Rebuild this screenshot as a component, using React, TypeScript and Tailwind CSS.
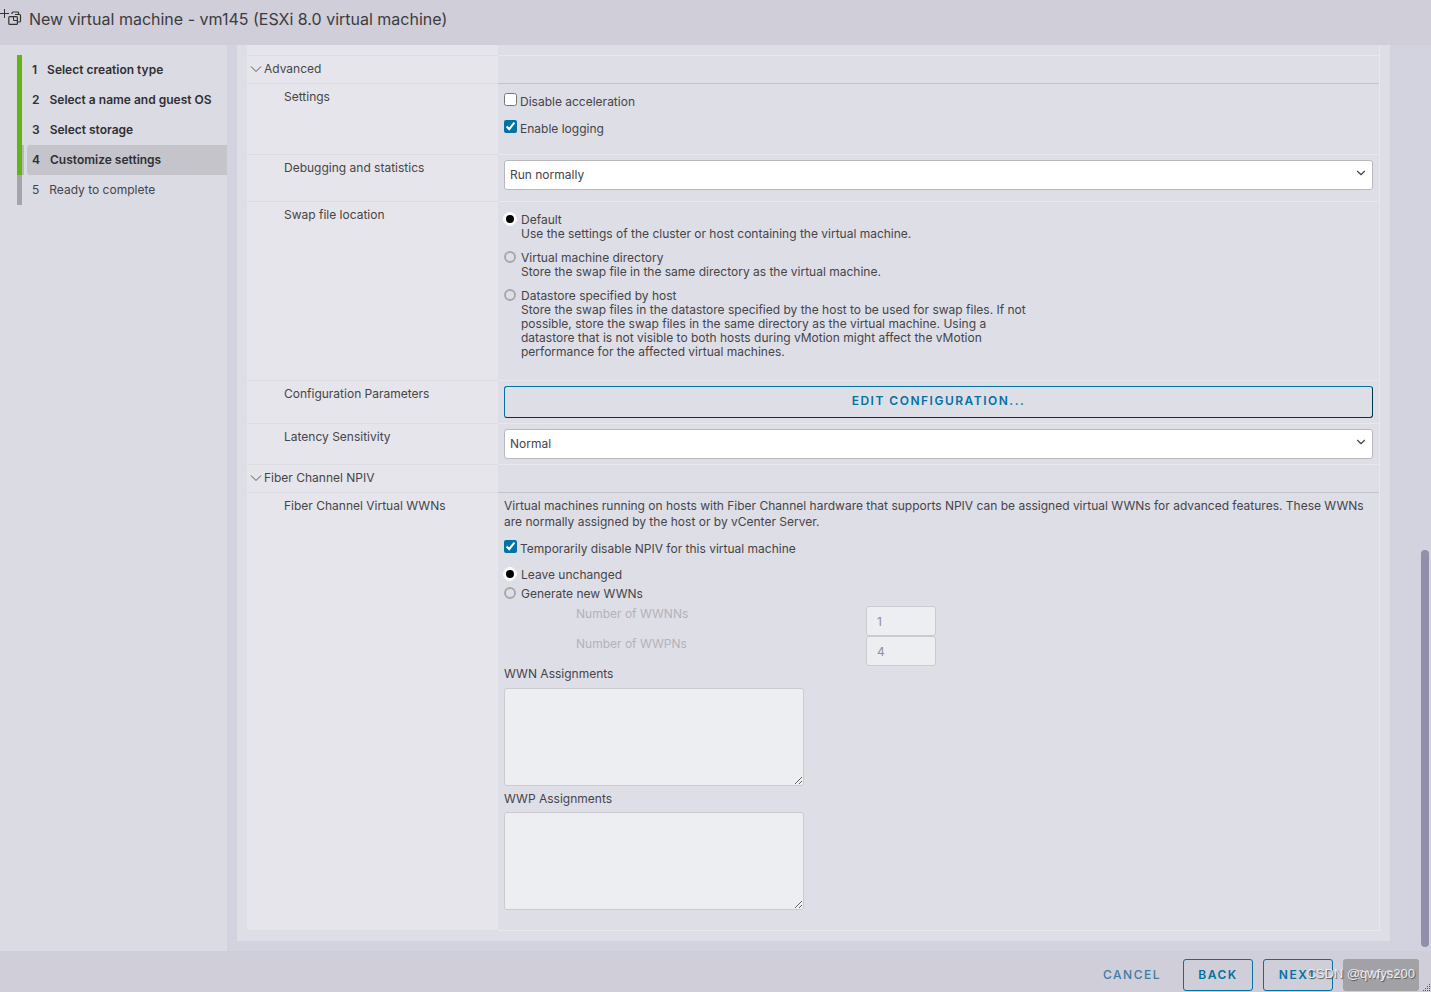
import React, { useState } from 'react';
import { ChevronDown } from 'lucide-react';
import clsx from 'clsx';

const steps = [
  'Select creation type',
  'Select a name and guest OS',
  'Select storage',
  'Customize settings',
  'Ready to complete',
];

const swapOptions = [
  {
    id: 'default',
    label: 'Default',
    text: 'Use the settings of the cluster or host containing the virtual machine.',
  },
  {
    id: 'directory',
    label: 'Virtual machine directory',
    text: 'Store the swap file in the same directory as the virtual machine.',
  },
  {
    id: 'datastore',
    label: 'Datastore specified by host',
    text: 'Store the swap files in the datastore specified by the host to be used for swap files. If not possible, store the swap files in the same directory as the virtual machine. Using a datastore that is not visible to both hosts during vMotion might affect the vMotion performance for the affected virtual machines.',
  },
];

const NewVmIcon = () => (
  <svg width="22" height="26" viewBox="0 0 22 26" fill="none" stroke="#333" aria-hidden="true">
    <path d="M0 13.5h9M4.5 9v9" />
    <path d="M12 14v-1a1 1 0 0 1 1-1h5.5M15 14.5h4.5a1 1 0 0 1 1 1v5.5a1 1 0 0 1-1 1h-1.5M18.5 12v3" strokeWidth="1.2" />
    <rect x="8.8" y="16.6" width="8.6" height="7.8" rx="1" strokeWidth="1.2" />
    <path d="M13.5 17v3.5h4" />
  </svg>
);

const Checkbox = ({ label, defaultChecked = false }: { label: string; defaultChecked?: boolean }) => (
  <label className="flex items-start gap-[3px]">
    <input type="checkbox" defaultChecked={defaultChecked} className="size-[13px] accent-[#0072a3]" />
    <span className="pt-px">{label}</span>
  </label>
);

type RadioProps = {
  name: string;
  label: string;
  text?: string;
  checked: boolean;
  onChange: () => void;
};

const Radio = ({ name, label, text, checked, onChange }: RadioProps) => (
  <label className="flex items-start gap-[5px] leading-[14px]">
    <input
      type="radio"
      name={name}
      checked={checked}
      onChange={onChange}
      className="size-3 shrink-0 appearance-none rounded-full border-2 border-[#a9a9ad] checked:border-white checked:bg-black checked:outline checked:outline-white"
    />
    <span className="flex max-w-[510px] flex-col">
      <span>{label}</span>
      {text && <span>{text}</span>}
    </span>
  </label>
);

const Select = ({ id, options }: { id: string; options: string[] }) => (
  <div className="relative">
    <select
      id={id}
      className="block h-[30px] w-full appearance-none rounded-[3px] border border-[#b9b9bd] bg-white px-[5px]"
    >
      {options.map((option) => (
        <option key={option}>{option}</option>
      ))}
    </select>
    <ChevronDown size={14} strokeWidth={2} className="pointer-events-none absolute top-1.5 right-[5px]" />
  </div>
);

type RowProps = {
  label: string;
  htmlFor?: string;
  className?: string;
  children: React.ReactNode;
};

const Row = ({ label, htmlFor, className, children }: RowProps) => (
  <div className="grid grid-cols-[251px_minmax(0,1fr)]">
    <div className="border-b border-[#dbdbe1] bg-[#e6e5eb] pt-[5px] pl-[37px]">
      {htmlFor ? <label htmlFor={htmlFor}>{label}</label> : label}
    </div>
    <div className={clsx('border-b border-[#e7e7ec] px-1.5', className)}>{children}</div>
  </div>
);

const SectionRow = ({ label }: { label: string }) => (
  <div className="grid grid-cols-[251px_minmax(0,1fr)]">
    <div className="border-b border-[#dbdbe1] bg-[#e6e5eb] pb-px">
      <button type="button" className="flex h-[26px] items-center gap-0.5 pl-[3px]">
        <svg width="12" height="8" viewBox="0 0 12 8" fill="none" stroke="#555" aria-hidden="true">
          <path d="M1 1.5l5 5 5-5" />
        </svg>
        {label}
      </button>
    </div>
    <div className="border-b border-[#c3c3cc]" />
  </div>
);

const outlineButton =
  'h-8 rounded-[3px] border border-[#0072a3] text-[12px] font-semibold tracking-[1.5px] text-[#0072a3]';
const disabledField = 'rounded-[3px] border border-[#cbcbcf] bg-[#edeef2] text-[#8f8f94]';

const App = () => {
  const [swap, setSwap] = useState('default');
  const [wwn, setWwn] = useState('leave');
  const current = 3;

  return (
    <div className="flex min-h-screen flex-col bg-[#d3d3df] font-['Inter','Noto_Sans',sans-serif] text-[12px] leading-4 text-[#454548]">
      <header className="flex h-[45px] items-start gap-[7px] bg-[#cfced9]">
        <NewVmIcon />
        <h1 className="pt-[7px] text-[16px] leading-6 text-[#3c3c40]">
          New virtual machine - vm145 (ESXi 8.0 virtual machine)
        </h1>
      </header>

      <div className="flex flex-1">
        <nav className="w-[227px] shrink-0 bg-[#dbdbe4] pt-2.5 pl-[17px]">
          <ol>
            {steps.map((step, i) => (
              <li
                key={step}
                className={clsx('flex h-[30px] border-l-5', i <= current ? 'border-[#60b515]' : 'border-[#a4a4a9]')}
              >
                <span className={clsx('mr-[3px] w-0.5', i === current && 'bg-[#b9b9c4]')} />
                <a
                  href="#"
                  className={clsx(
                    'flex flex-1 items-center gap-2.5 rounded-l-[3px] pl-[5px]',
                    i <= current && 'font-semibold text-[#303033]',
                    i === current && 'bg-[#c4c4ca]',
                  )}
                >
                  <span>{i + 1}</span>
                  {step}
                </a>
              </li>
            ))}
          </ol>
        </nav>

        <main className="min-w-0 flex-1 pr-[31px] pb-2.5 pl-2.5">
          <div className="bg-[#dedee7] px-2.5 pb-2.5">
            <div className="border-r border-[#e7e7ec]">
              <div className="grid h-[11px] grid-cols-[251px_minmax(0,1fr)]">
                <div className="border-b border-[#dbdbe1] bg-[#e6e5eb]" />
                <div className="border-b border-[#e7e7ec]" />
              </div>

              <SectionRow label="Advanced" />
              <Row label="Settings" className="flex flex-col gap-2.5 pt-[9px] pb-[17px]">
                <Checkbox label="Disable acceleration" />
                <Checkbox label="Enable logging" defaultChecked />
              </Row>
              <Row label="Debugging and statistics" htmlFor="debugging" className="pt-[5px] pb-[11px]">
                <Select id="debugging" options={['Run normally', 'Record debugging information', 'Record statistics']} />
              </Row>
              <Row label="Swap file location" className="flex flex-col gap-2.5 pt-[11px] pb-[21px]">
                {swapOptions.map((option) => (
                  <Radio
                    key={option.id}
                    name="swap"
                    label={option.label}
                    text={option.text}
                    checked={swap === option.id}
                    onChange={() => setSwap(option.id)}
                  />
                ))}
              </Row>
              <Row label="Configuration Parameters" className="py-[5px]">
                <button
                  type="button"
                  className={clsx(outlineButton, 'block w-full border-r-[#00364d] border-b-[#00364d] pb-0.5')}
                >
                  EDIT CONFIGURATION...
                </button>
              </Row>
              <Row label="Latency Sensitivity" htmlFor="latency" className="py-[5px]">
                <Select id="latency" options={['Normal', 'Low', 'Medium', 'High']} />
              </Row>

              <SectionRow label="Fiber Channel NPIV" />
              <Row label="Fiber Channel Virtual WWNs" className="pt-[5px] pb-5">
                <p>
                  Virtual machines running on hosts with Fiber Channel hardware that supports NPIV can be assigned
                  virtual WWNs for advanced features. These WWNs are normally assigned by the host or by vCenter Server.
                </p>
                <div className="pt-2.5 pb-[11px]">
                  <Checkbox label="Temporarily disable NPIV for this virtual machine" defaultChecked />
                </div>
                <div className="flex flex-col gap-[5px] pb-[5px]">
                  <Radio
                    name="wwn"
                    label="Leave unchanged"
                    checked={wwn === 'leave'}
                    onChange={() => setWwn('leave')}
                  />
                  <Radio
                    name="wwn"
                    label="Generate new WWNs"
                    checked={wwn === 'generate'}
                    onChange={() => setWwn('generate')}
                  />
                </div>
                <div className="grid grid-cols-[290px_70px] pl-[72px] text-[#b3b3b8]">
                  <label htmlFor="wwnns">Number of WWNNs</label>
                  <input id="wwnns" defaultValue="1" disabled className={clsx(disabledField, 'h-[30px] px-2.5')} />
                  <label htmlFor="wwpns">Number of WWPNs</label>
                  <input id="wwpns" defaultValue="4" disabled className={clsx(disabledField, 'h-[30px] px-2.5')} />
                </div>
                <label htmlFor="wwn-list" className="block pb-1.5">
                  WWN Assignments
                </label>
                <textarea id="wwn-list" disabled className={clsx(disabledField, 'block h-[98px] w-[300px]')} />
                <label htmlFor="wwp-list" className="block py-[5px]">
                  WWP Assignments
                </label>
                <textarea id="wwp-list" disabled className={clsx(disabledField, 'block h-[98px] w-[300px]')} />
              </Row>
            </div>
          </div>
        </main>

        <div className="flex w-2.5 shrink-0 flex-col justify-end pb-1">
          <div className="h-[397px] w-2 rounded-full bg-[#9090aa]" />
        </div>
      </div>

      <footer className="relative flex h-[41px] items-start justify-end gap-2.5 bg-[#cfced9] pt-2 pr-3">
        <button
          type="button"
          className="mr-3 h-8 text-[12px] font-medium tracking-[1.5px] text-[#3f7ba3]"
        >
          CANCEL
        </button>
        <button type="button" className={clsx(outlineButton, 'w-[70px]')}>
          BACK
        </button>
        <button type="button" className={clsx(outlineButton, 'w-[70px]')}>
          NEXT
        </button>
        <button
          type="button"
          disabled
          className="h-8 w-[76px] rounded-[3px] bg-[#a1a1a6] text-[12px] font-semibold tracking-[1.5px] text-[#d3d3d8]"
        >
          FINISH
        </button>
        <span className="pointer-events-none absolute right-4 bottom-2.5 font-['Liberation_Sans',sans-serif] text-[13px] text-[#ececf0] [text-shadow:1px_1px_1px_#555]">
          CSDN @qwfys200
        </span>
        <svg className="absolute right-0 bottom-0" width="8" height="8" viewBox="0 0 8 8" fill="#555" aria-hidden="true">
          <path d="M6 0h1v1h-1zM4 2h1v1h-1zM6 2h1v1h-1zM2 4h1v1h-1zM4 4h1v1h-1zM6 4h1v1h-1zM0 6h1v1h-1zM2 6h1v1h-1zM4 6h1v1h-1zM6 6h1v1h-1z" />
        </svg>
      </footer>
    </div>
  );
};

export default App;
